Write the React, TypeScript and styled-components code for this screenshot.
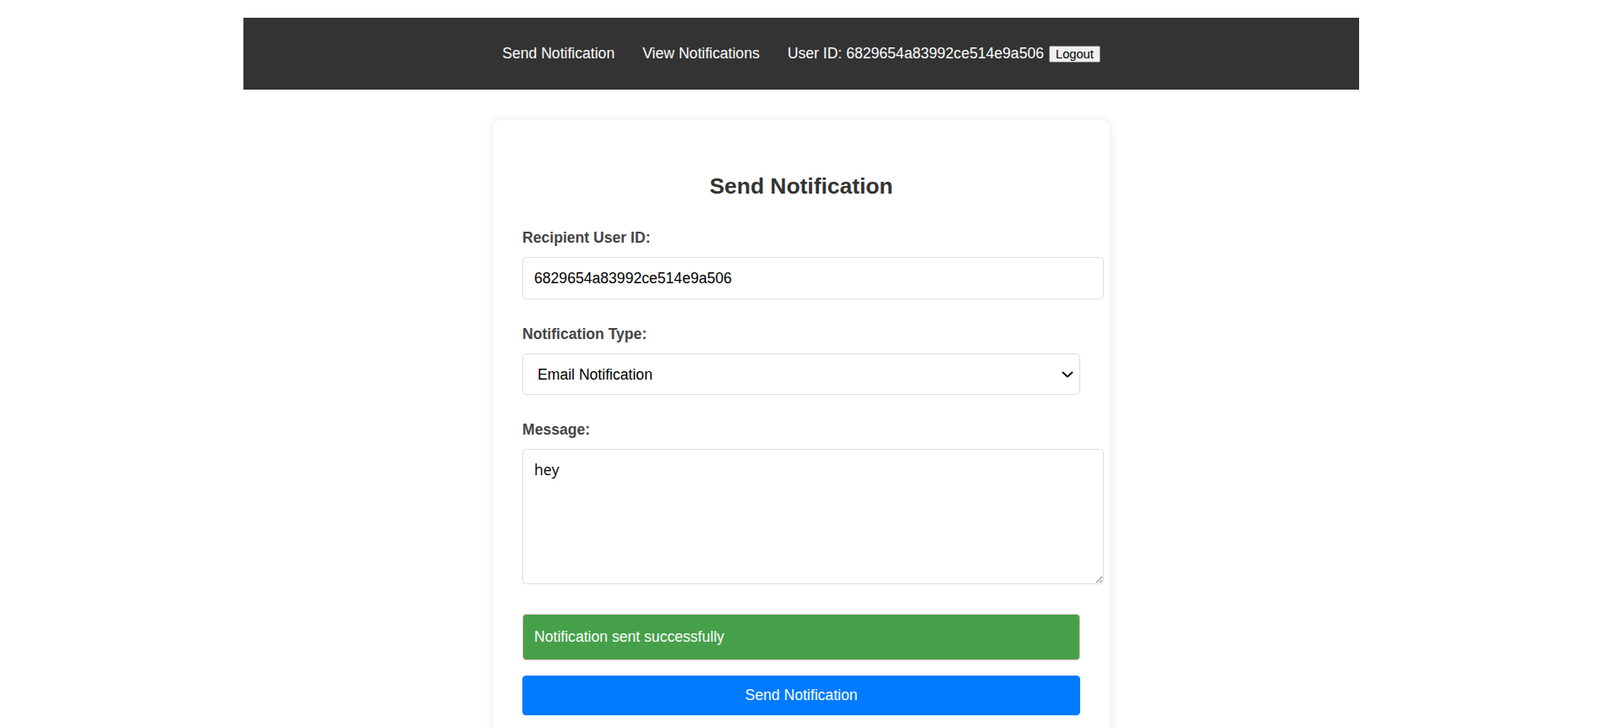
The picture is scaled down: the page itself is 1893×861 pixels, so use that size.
import styled, { createGlobalStyle } from "styled-components";

const GlobalStyle = createGlobalStyle`
  html {
    overflow: hidden;
  }

  body {
    margin: 0;
    background: #fff;
    font-family: "Liberation Sans", Arial, sans-serif;
  }
`;

const Page = styled.div`
  padding: 21px 0 0 3px;
`;

const NavBar = styled.nav`
  width: 1320px;
  height: 85px;
  margin: 0 auto;
  background: #333;
  display: flex;
  align-items: center;
  justify-content: center;
  gap: 33px;
  font-size: 17.6px;
  color: #fff;
`;

const NavLink = styled.a`
  color: #fff;
  text-decoration: none;
  cursor: pointer;
`;

const UserInfo = styled.div`
  display: flex;
  align-items: center;
`;

const LogoutButton = styled.button`
  margin-left: 6px;
  padding: 1px 7px;
  font-family: "Liberation Sans", Arial, sans-serif;
  font-size: 14.67px;
  color: #000;
  background: #efefef;
  border: 1px solid #767676;
  border-radius: 2px;
`;

const Card = styled.div`
  box-sizing: border-box;
  width: 730px;
  margin: 36px auto 0;
  padding: 35px;
  background: #fff;
  border-radius: 9px;
  box-shadow: 0 0 11px rgba(0, 0, 0, 0.1);
`;

const Title = styled.h2`
  margin: 28px 0 35px;
  text-align: center;
  font-size: 26.4px;
  font-weight: bold;
  color: #333;
`;

const FormGroup = styled.div`
  margin-bottom: 31px;
`;

const Label = styled.label`
  display: block;
  margin-bottom: 12px;
  font-size: 17.6px;
  font-weight: bold;
  color: #444;
`;

const TextInput = styled.input`
  display: block;
  width: 100%;
  padding: 13.5px 13px;
  border: 1px solid #ddd;
  border-radius: 4.4px;
  font-family: "Liberation Sans", Arial, sans-serif;
  font-size: 17.6px;
  color: #000;
  outline: none;
`;

const SelectWrap = styled.div`
  position: relative;
`;

const Select = styled.select`
  display: block;
  box-sizing: border-box;
  width: 100%;
  height: 49px;
  padding: 0 17px;
  border: 1px solid #ddd;
  border-radius: 4.4px;
  background: #fff;
  appearance: none;
  font-family: "Liberation Sans", Arial, sans-serif;
  font-size: 17.6px;
  color: #000;
  outline: none;
`;

const Chevron = styled.svg`
  position: absolute;
  right: 8px;
  top: 50%;
  width: 14px;
  height: 8px;
  margin-top: -4px;
  pointer-events: none;
`;

const TextArea = styled.textarea`
  display: block;
  width: 100%;
  height: 132px;
  padding: 13px;
  border: 1px solid #ddd;
  border-radius: 4.4px;
  font-family: "Open Sans", "Noto Sans", sans-serif;
  font-size: 17.6px;
  line-height: 1.2;
  color: #000;
  outline: none;
`;

const Alert = styled.div<{ $kind: "success" | "error" }>`
  margin: 35px 0 18px;
  padding: 16px 13px;
  border: 1px solid #f5c6cb;
  border-radius: 4.4px;
  background: ${(p) => (p.$kind === "success" ? "#46a04a" : "#f8d7da")};
  color: ${(p) => (p.$kind === "success" ? "#fff" : "#721c24")};
  font-size: 17.6px;
`;

const SubmitButton = styled.button`
  display: block;
  width: 100%;
  padding: 13px;
  border: none;
  border-radius: 4.4px;
  background: #007bff;
  color: #fff;
  font-family: "Liberation Sans", Arial, sans-serif;
  font-size: 17.6px;
  cursor: pointer;
`;

const userId = "6829654a83992ce514e9a506";

export default function App() {
  return (
    <Page>
      <GlobalStyle />
      <NavBar>
        <NavLink>Send Notification</NavLink>
        <NavLink>View Notifications</NavLink>
        <UserInfo>
          <span>User ID: {userId}</span>
          <LogoutButton>Logout</LogoutButton>
        </UserInfo>
      </NavBar>

      <Card>
        <Title>Send Notification</Title>
        <form onSubmit={(e) => e.preventDefault()}>
          <FormGroup>
            <Label htmlFor="recipient">Recipient User ID:</Label>
            <TextInput id="recipient" type="text" defaultValue={userId} />
          </FormGroup>
          <FormGroup>
            <Label htmlFor="type">Notification Type:</Label>
            <SelectWrap>
              <Select id="type" defaultValue="email">
                <option value="email">Email Notification</option>
                <option value="sms">SMS Notification</option>
                <option value="in-app">In-App Notification</option>
              </Select>
              <Chevron viewBox="0 0 14 8" fill="none">
                <path
                  d="M1.5 1.5 L7 6.5 L12.5 1.5"
                  stroke="#111"
                  strokeWidth="2"
                  strokeLinecap="round"
                  strokeLinejoin="round"
                />
              </Chevron>
            </SelectWrap>
          </FormGroup>
          <FormGroup>
            <Label htmlFor="message">Message:</Label>
            <TextArea id="message" defaultValue="hey" />
          </FormGroup>
          <Alert $kind="success">Notification sent successfully</Alert>
          <SubmitButton type="submit">Send Notification</SubmitButton>
        </form>
      </Card>
    </Page>
  );
}
